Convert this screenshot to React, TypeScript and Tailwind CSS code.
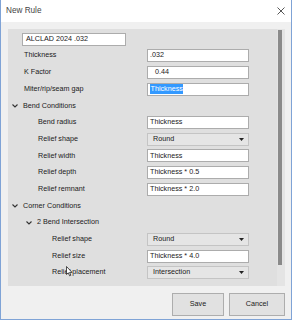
import type { ReactNode } from "react";

type Row =
  | { kind: "input"; label: string; level: number; value: string; selected?: boolean; pad?: boolean }
  | { kind: "select"; label: string; level: number; value: string }
  | { kind: "header"; label: string; level: number };

const ROWS: Row[] = [
  { kind: "input", label: "Thickness", level: 0, value: ".032" },
  { kind: "input", label: "K Factor", level: 0, value: "0.44", pad: true },
  { kind: "input", label: "Miter/rip/seam gap", level: 0, value: "Thickness", selected: true },
  { kind: "header", label: "Bend Conditions", level: 0 },
  { kind: "input", label: "Bend radius", level: 1, value: "Thickness" },
  { kind: "select", label: "Relief shape", level: 1, value: "Round" },
  { kind: "input", label: "Relief width", level: 1, value: "Thickness" },
  { kind: "input", label: "Relief depth", level: 1, value: "Thickness * 0.5" },
  { kind: "input", label: "Relief remnant", level: 1, value: "Thickness * 2.0" },
  { kind: "header", label: "Corner Conditions", level: 0 },
  { kind: "header", label: "2 Bend Intersection", level: 1 },
  { kind: "select", label: "Relief shape", level: 2, value: "Round" },
  { kind: "input", label: "Relief size", level: 2, value: "Thickness * 4.0" },
  { kind: "select", label: "Relief placement", level: 2, value: "Intersection" },
];

const LABEL_PAD = ["pl-[16px]", "pl-[30px]", "pl-[44px]"];
const HEADER_PAD = ["pl-[4px]", "pl-[18px]"];

function Chevron() {
  return (
    <svg width="6" height="4" viewBox="0 0 6 4" className="mr-[5px] shrink-0">
      <path d="M0.5 0.5 L3 3 L5.5 0.5" fill="none" stroke="#333" strokeWidth="1.1" />
    </svg>
  );
}

function Field({ children }: { children: ReactNode }) {
  return (
    <div className="flex h-[13px] w-[102px] items-center border border-[#acacac] bg-white pl-[2px] text-[#1a1a1a]">
      {children}
    </div>
  );
}

function RowView({ row }: { row: Row }) {
  if (row.kind === "header") {
    return (
      <div className={`flex h-[16.7px] items-center ${HEADER_PAD[row.level]}`}>
        <Chevron />
        <span>{row.label}</span>
      </div>
    );
  }
  return (
    <div className="flex h-[16.7px] items-center">
      <div className={`w-[139px] shrink-0 ${LABEL_PAD[row.level]}`}>{row.label}</div>
      {row.kind === "input" ? (
        <Field>
          {row.selected ? (
            <span className="bg-[#3399ff] px-[0.5px] leading-[10px] text-white">{row.value}</span>
          ) : (
            <span className={row.pad ? "pl-[5px]" : ""}>{row.value}</span>
          )}
        </Field>
      ) : (
        <div className="flex h-[13px] w-[102px] items-center justify-between border border-[#c4c4c4] bg-[#e5e5e5] pl-[5px] pr-[4px] text-[#1a1a1a]">
          <span>{row.value}</span>
          <svg width="5" height="3" viewBox="0 0 5 3">
            <path d="M0 0 H5 L2.5 3 Z" fill="#222" />
          </svg>
        </div>
      )}
    </div>
  );
}

export default function App() {
  return (
    <div
      className="relative flex h-[320px] w-[292px] flex-col border-x border-b border-[#7fa3d6] bg-[#f0f0f0] text-[7.2px] text-[#1a1a1a]"
      style={{ fontFamily: '"Liberation Sans", Arial, sans-serif' }}
    >
      {/* title bar */}
      <div className="flex h-[22px] shrink-0 items-center justify-between bg-white pl-[5px] pr-[6px]">
        <span className="text-[8.2px] text-[#444]">New Rule</span>
        <svg width="8" height="8" viewBox="0 0 8 8">
          <path d="M0.5 0.5 L7.5 7.5 M7.5 0.5 L0.5 7.5" stroke="#444" strokeWidth="0.9" />
        </svg>
      </div>

      {/* property grid */}
      <div className="ml-[7px] mt-[7px] flex h-[257px] w-[277px] bg-[#dfdfdf]">
        <div className="flex-1 pt-[4px]">
          <div className="ml-[14px] flex h-[13px] w-[104px] items-center border border-[#acacac] bg-white pl-[3px]">
            ALCLAD 2024 .032
          </div>
          <div className="mt-[1.5px]">
            {ROWS.map((r, i) => (
              <RowView key={i} row={r} />
            ))}
          </div>
        </div>
        <div className="flex w-[8px] shrink-0 flex-col bg-[#e4e4e4] pt-[1px]">
          <div className="ml-[1px] h-[235px] w-[4px] bg-[#8a8a8a]" />
        </div>
      </div>

      {/* buttons */}
      <div className="mt-[7px] flex justify-end gap-[5px] pr-[6px]">
        <button className="h-[23px] w-[52px] border border-[#adadad] bg-[#e1e1e1] text-[7.2px] text-[#1a1a1a]">
          Save
        </button>
        <button className="h-[23px] w-[56px] border border-[#adadad] bg-[#e1e1e1] text-[7.2px] text-[#1a1a1a]">
          Cancel
        </button>
      </div>

      {/* mouse pointer */}
      <svg
        width="7"
        height="11"
        viewBox="0 0 7 11"
        className="absolute left-[65px] top-[266px]"
      >
        <path d="M0.5 0.5 L0.5 8.5 L2.3 6.8 L3.6 9.8 L4.8 9.3 L3.6 6.4 L6 6.4 Z" fill="#fff" stroke="#222" strokeWidth="0.8" strokeLinejoin="round" />
      </svg>
    </div>
  );
}
